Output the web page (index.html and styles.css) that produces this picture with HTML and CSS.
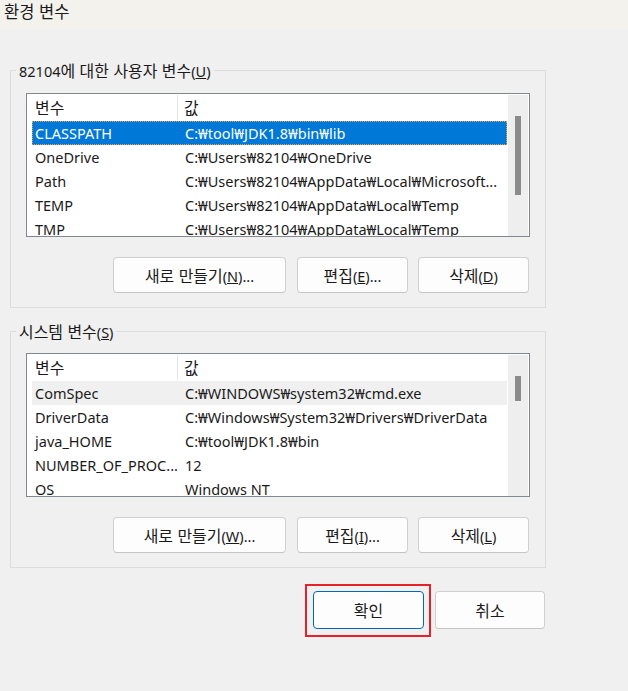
FILE: index.html
```html
<!DOCTYPE html>
<html lang="ko">
<head>
<meta charset="utf-8">
<title>환경 변수</title>
<link rel="stylesheet" href="styles.css">
</head>
<body>
<div class="titlebar"><span class="ko">환경 변수</span></div>

<fieldset class="group group-user">
  <legend>82104<span class="ko">에 대한 사용자 변수</span>(<u>U</u>)</legend>
  <div class="listbox">
    <div class="list-content">
      <div class="row header"><div class="c1"><span class="ko">변수</span></div><div class="c2"><span class="ko">값</span></div></div>
      <div class="row selected"><div class="c1">CLASSPATH</div><div class="c2">C:₩tool₩JDK1.8₩bin₩lib</div></div>
      <div class="row"><div class="c1">OneDrive</div><div class="c2">C:₩Users₩82104₩OneDrive</div></div>
      <div class="row"><div class="c1">Path</div><div class="c2">C:₩Users₩82104₩AppData₩Local₩Microsoft...</div></div>
      <div class="row"><div class="c1">TEMP</div><div class="c2">C:₩Users₩82104₩AppData₩Local₩Temp</div></div>
      <div class="row"><div class="c1">TMP</div><div class="c2">C:₩Users₩82104₩AppData₩Local₩Temp</div></div>
    </div>
    <div class="scrollbar"><div class="thumb thumb-user"></div></div>
  </div>
  <div class="buttons">
    <button class="btn btn-wide"><span class="ko">새로 만들기</span>(<u>N</u>)...</button>
    <button class="btn"><span class="ko">편집</span>(<u>E</u>)...</button>
    <button class="btn"><span class="ko">삭제</span>(<u>D</u>)</button>
  </div>
</fieldset>

<fieldset class="group group-sys">
  <legend><span class="ko">시스템 변수</span>(<u>S</u>)</legend>
  <div class="listbox">
    <div class="list-content">
      <div class="row header"><div class="c1"><span class="ko">변수</span></div><div class="c2"><span class="ko">값</span></div></div>
      <div class="row hover"><div class="c1">ComSpec</div><div class="c2">C:₩WINDOWS₩system32₩cmd.exe</div></div>
      <div class="row"><div class="c1">DriverData</div><div class="c2">C:₩Windows₩System32₩Drivers₩DriverData</div></div>
      <div class="row"><div class="c1">java_HOME</div><div class="c2">C:₩tool₩JDK1.8₩bin</div></div>
      <div class="row"><div class="c1">NUMBER_OF_PROC...</div><div class="c2">12</div></div>
      <div class="row"><div class="c1">OS</div><div class="c2">Windows NT</div></div>
    </div>
    <div class="scrollbar"><div class="thumb thumb-sys"></div></div>
  </div>
  <div class="buttons">
    <button class="btn btn-wide"><span class="ko">새로 만들기</span>(<u>W</u>)...</button>
    <button class="btn"><span class="ko">편집</span>(<u>I</u>)...</button>
    <button class="btn"><span class="ko">삭제</span>(<u>L</u>)</button>
  </div>
</fieldset>

<div class="actions">
  <div class="highlight"><button class="btn btn-ok"><span class="ko">확인</span></button></div>
  <button class="btn btn-cancel"><span class="ko">취소</span></button>
</div>
</body>
</html>
```
FILE: styles.css
```css
html, body {
  margin: 0;
  padding: 0;
}
body {
  width: 628px;
  height: 691px;
  overflow: hidden;
  background: #f0f0f0;
  color: #1a1a1a;
  font-family: "Noto Sans", "Noto Sans CJK KR", sans-serif;
  font-size: 14.5px;
}
.ko {
  font-family: "Noto Sans CJK KR", sans-serif;
  font-size: 1.1em;
}
.titlebar {
  height: 29px;
  background: #f4f2ed;
  padding-left: 4px;
  font-size: 15px;
  line-height: 22px;
  box-sizing: border-box;
}
.group {
  box-sizing: border-box;
  width: 536px;
  margin: 0 0 0 10px;
  padding: 13px 15px 14px 15px;
  border: 1px solid #dcdcdc;
  min-width: 0;
}
.group-user {
  margin-top: 31px;
}
.group-sys {
  margin-top: 13px;
  padding-top: 12px;
}
.group legend {
  padding: 0 3px;
  margin-left: -10px;
  line-height: 20px;
  height: 20px;
}
.listbox {
  box-sizing: border-box;
  height: 144px;
  border: 1px solid #828790;
  background: #fff;
  display: flex;
  overflow: hidden;
}
.list-content {
  flex: 1;
  padding-left: 5px;
  overflow: hidden;
}
.row {
  display: flex;
  height: 24px;
  line-height: 24px;
  white-space: nowrap;
  box-sizing: border-box;
}
.row.header {
  height: 27px;
  line-height: 27px;
}
.c1 {
  width: 146px;
  box-sizing: border-box;
  padding-left: 3px;
  overflow: hidden;
}
.c2 {
  flex: 1;
  padding-left: 7px;
  overflow: hidden;
}
.header .c1 {
  border-right: 1px solid #e5e5e5;
  margin: 1px 0 1px 0;
  line-height: 25px;
}
.header .c2 {
  padding-left: 6px;
}
.row.selected {
  background: #0078d7;
  color: #fff;
  border: 1px dotted #f0a040;
  line-height: 22px;
}
.row.selected .c1 {
  padding-left: 2px;
  width: 145px;
}
.row.hover {
  background: #f0f0f0;
}
.scrollbar {
  width: 22px;
  flex: none;
  box-sizing: border-box;
  background: #eeeeee;
  border-left: 1px solid #fff;
  border-right: 1px solid #fff;
  border-top: 1px solid #fff;
  display: flex;
  justify-content: center;
  padding-top: 21px;
}
.thumb {
  width: 6px;
  background: #8b8b8b;
}
.thumb-user {
  height: 79px;
}
.thumb-sys {
  height: 25px;
}
.buttons {
  display: flex;
  justify-content: flex-end;
  gap: 10px;
  margin-top: 20px;
  margin-right: 1px;
}
.btn {
  box-sizing: border-box;
  width: 111px;
  height: 36px;
  background: #fdfdfd;
  border: 1px solid #d0d0d0;
  border-bottom-color: #c4c4c4;
  border-radius: 4px;
  font-family: inherit;
  font-size: 14.5px;
  color: #1a1a1a;
  padding: 0;
  line-height: 20px;
}
.btn-wide {
  width: 173px;
  margin-right: 1px;
}
.actions {
  box-sizing: border-box;
  width: 536px;
  margin: 16px 0 0 10px;
  display: flex;
  justify-content: flex-end;
  align-items: flex-start;
  padding-right: 1px;
}
.highlight {
  border: 2px solid #e8202a;
  padding: 5px 5px 6px 6px;
  display: flex;
}
.btn-ok {
  height: 38px;
  border: 1px solid #0067c0;
}
.btn-cancel {
  width: 110px;
  height: 38px;
  margin-left: 4px;
  margin-top: 7px;
}
```
